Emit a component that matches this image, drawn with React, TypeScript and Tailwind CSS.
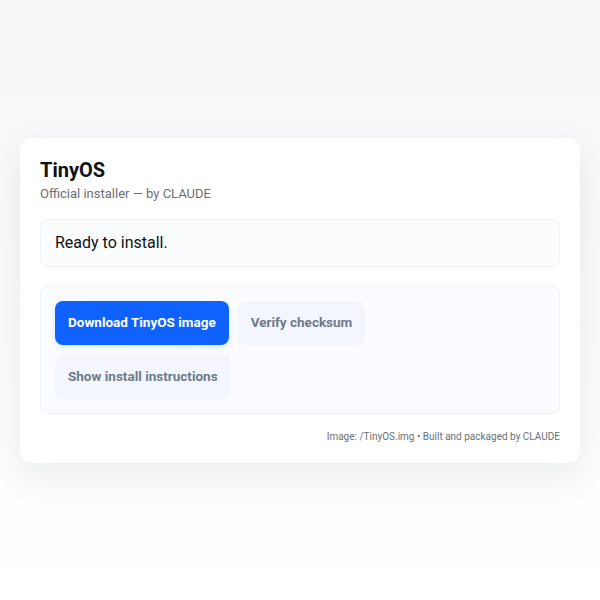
export default function App() {
  return (
    <div
      className="min-h-screen flex items-center justify-center px-5 bg-gradient-to-b from-[#f6f7f9] to-white"
      style={{ fontFamily: "Roboto, 'Liberation Sans', sans-serif" }}
    >
      <div className="w-full rounded-xl bg-white px-5 pt-5 pb-[18px] shadow-[0_12px_36px_rgba(15,23,42,0.08)]">
        {/* Header */}
        <h1 className="text-xl leading-6 font-bold text-[#111111]">TinyOS</h1>
        <p className="mt-0.5 text-[13px] leading-5 text-[#6b6f76]">Official installer — by CLAUDE</p>

        {/* Status */}
        <div className="mt-[15px] rounded-lg border border-[#eef0f4] bg-[#fbfcfd] px-[14px] py-[11px] text-base leading-6 text-[#111111]">
          Ready to install.
        </div>

        {/* Actions */}
        <div className="mt-[19px] rounded-lg border border-[#eef0f4] bg-[#fbfcff] p-[14px]">
          <div className="flex flex-wrap gap-x-[9px] gap-y-[10px]">
            <button className="h-11 rounded-lg bg-[#0f62fe] px-[13px] text-[13.5px] font-bold text-white shadow-[0_2px_6px_rgba(15,98,254,0.15)]">
              Download TinyOS image
            </button>
            <button className="h-11 rounded-lg bg-[#f3f6fc] px-[13px] text-[13.5px] font-bold text-[#6f7a89]">
              Verify checksum
            </button>
            <button className="h-11 rounded-lg bg-[#f3f6fc] px-[13px] text-[13.5px] font-bold text-[#6f7a89]">
              Show install instructions
            </button>
          </div>
        </div>

        {/* Footer */}
        <p className="mt-[15px] text-right text-[10px] leading-4 text-[#6b6f76]">
          Image: /TinyOS.img • Built and packaged by CLAUDE
        </p>
      </div>
    </div>
  );
}
